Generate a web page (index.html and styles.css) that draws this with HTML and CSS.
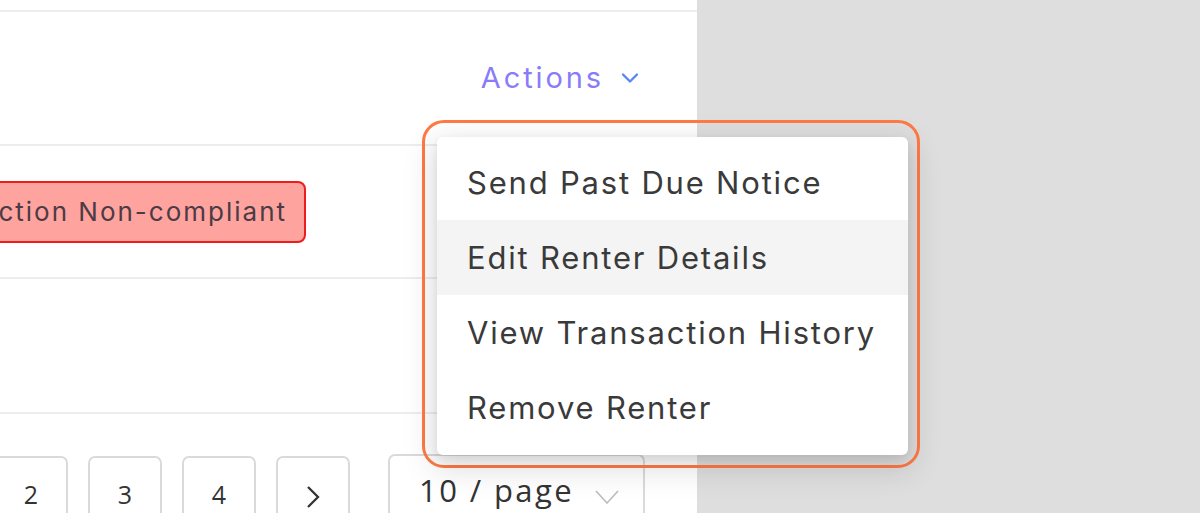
FILE: index.html
```html
<!DOCTYPE html>
<html lang="en">
<head>
  <meta charset="UTF-8" />
  <meta name="viewport" content="width=device-width, initial-scale=1.0"/>
  <title>Renters</title>
  <link rel="stylesheet" href="styles.css">
</head>
<body>
  <div class="page">
    <div class="panel">
      <div class="table">
        <div class="row row-head">
          <a class="actions" href="#">Actions
            <svg class="chev" width="18" height="12" viewBox="0 0 18 12"><path d="M2 2.5 L9 9.5 L16 2.5" fill="none" stroke="currentColor" stroke-width="2.4" stroke-linecap="round" stroke-linejoin="round"/></svg>
          </a>
        </div>
        <div class="row row-tag">
          <div class="tag-cell">
            <span class="tag">Inspection Non-compliant</span>
          </div>
        </div>
        <div class="row row-empty"></div>
      </div>

      <div class="pagination">
        <span class="page-item">2</span>
        <span class="page-item">3</span>
        <span class="page-item">4</span>
        <span class="page-item next">
          <svg width="18" height="26" viewBox="0 0 18 26"><path d="M4 3 L14 13 L4 23" fill="none" stroke="#333" stroke-width="2.3"/></svg>
        </span>
        <span class="page-size">10 / page
          <svg width="26" height="18" viewBox="0 0 26 18"><path d="M2 3 L13 15 L24 3" fill="none" stroke="#bfbfbf" stroke-width="1.8"/></svg>
        </span>
      </div>
    </div>
    <div class="mask"></div>
  </div>

  <!-- dropdown opened from Actions -->
  <div class="menu-highlight"></div>
  <ul class="menu">
    <li>Send Past Due Notice</li>
    <li class="active">Edit Renter Details</li>
    <li>View Transaction History</li>
    <li>Remove Renter</li>
  </ul>
</body>
</html>
```

FILE: styles.css
```css
* {
  box-sizing: border-box;
}
body {
  margin: 0;
  padding: 0;
  font-family: 'Inter', 'Open Sans', sans-serif;
  background: #dedede;
  overflow: hidden;
}
.page {
  display: flex;
  height: 513px;
}
.panel {
  width: 697px;
  background: #fff;
  overflow: hidden;
  padding-top: 10px;
}
.mask {
  flex: 1;
  background: #dedede;
}
.table {
  border-top: 2px solid #ededed;
}
.row {
  border-bottom: 2px solid #ededed;
  display: flex;
  align-items: center;
}
.row-head {
  height: 134px;
  justify-content: flex-end;
  padding-right: 58px;
  padding-bottom: 2px;
}
.actions {
  color: #8a7cf8;
  font-size: 29px;
  text-decoration: none;
  display: flex;
  align-items: center;
  gap: 17px;
  letter-spacing: 2.9px;
}
.actions .chev {
  color: #5b86f5;
  margin-top: 2px;
}
.row-tag {
  height: 133px;
}
.tag-cell {
  width: 306px;
  display: flex;
  justify-content: flex-end;
}
.tag {
  flex-shrink: 0;
  white-space: nowrap;
  margin-top: 1px;
  background: #ffa39e;
  border: 2px solid #ef1c1c;
  border-radius: 8px;
  padding: 0 17px 0 18px;
  height: 62px;
  line-height: 58px;
  font-size: 26px;
  color: #4b3b45;
  letter-spacing: 2px;
}
.row-empty {
  height: 135px;
}
.pagination {
  display: flex;
  align-items: flex-start;
  margin-top: 40px;
  margin-left: -6px;
  gap: 20px;
  font-family: 'Open Sans', sans-serif;
}
.page-item {
  width: 74px;
  height: 74px;
  border: 2px solid #dadada;
  border-radius: 7px;
  display: flex;
  justify-content: center;
  padding-top: 19px;
  font-size: 25px;
  color: #333;
  margin-top: 2px;
}
.page-item.next {
  padding-top: 0;
}
.page-item svg {
  margin-top: 26px;
}
.page-size {
  margin-left: 18px;
  width: 257px;
  height: 80px;
  border: 2px solid #dadada;
  border-radius: 7px;
  display: flex;
  gap: 20px;
  padding: 13px 0 0 29px;
  font-size: 31px;
  color: #333;
  letter-spacing: 2.4px;
}
.page-size svg {
  margin-top: 19px;
}
.menu-highlight {
  position: absolute;
  left: 422px;
  top: 120px;
  width: 498px;
  height: 348px;
  border: 3px solid #ff7a45;
  border-radius: 22px;
}
.menu {
  position: absolute;
  left: 437px;
  top: 137px;
  width: 471px;
  margin: 0;
  padding: 8px 0 10px;
  list-style: none;
  background: #fff;
  border-radius: 6px;
  box-shadow: 0 10px 30px 6px rgba(0, 0, 0, 0.12), 0 4px 10px rgba(0, 0, 0, 0.08);
}
.menu li {
  height: 75px;
  line-height: 75px;
  padding-left: 30px;
  font-size: 31px;
  color: #3a3a3a;
  letter-spacing: 1.8px;
}
.menu li.active {
  background: #f4f4f4;
}
```
